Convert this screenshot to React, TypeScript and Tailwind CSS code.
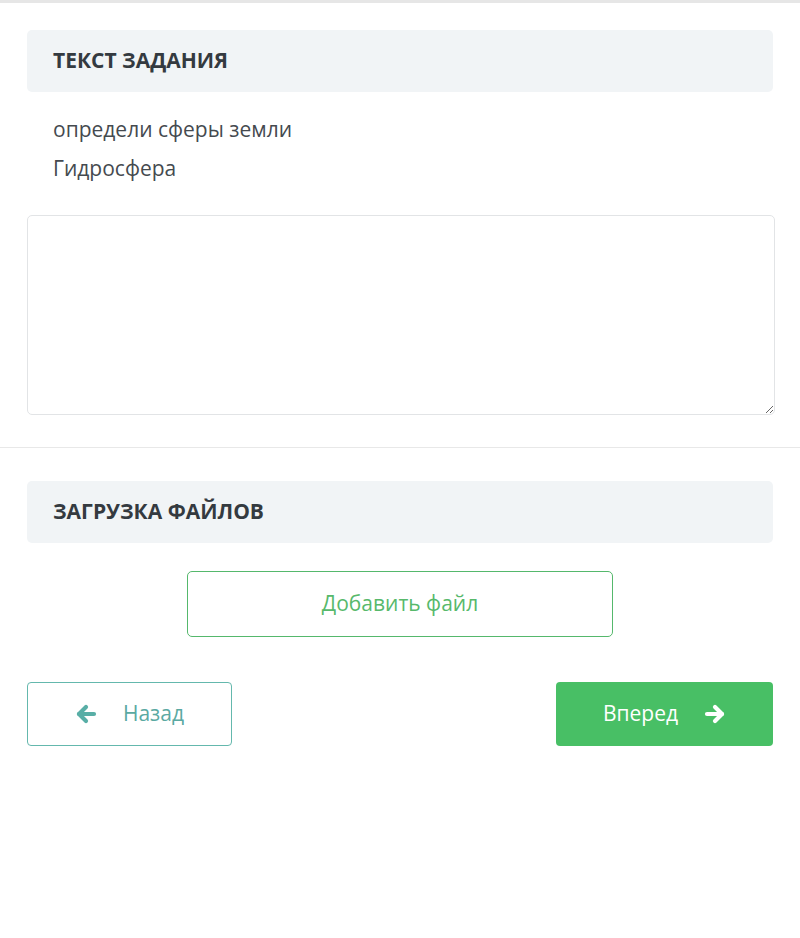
function Arrow({ dir, className }: { dir: "left" | "right"; className?: string }) {
  return (
    <svg viewBox="0 0 22 20" className={className} fill="none" stroke="currentColor" strokeWidth="4.2" strokeLinecap="round" strokeLinejoin="round">
      {dir === "right" ? (
        <>
          <path d="M3 10h15" />
          <path d="M11 3l7 7-7 7" />
        </>
      ) : (
        <>
          <path d="M19 10H4" />
          <path d="M11 3l-7 7 7 7" />
        </>
      )}
    </svg>
  );
}

function SectionHeader({ title }: { title: string }) {
  return (
    <div className="bg-[#f1f4f6] rounded-[5px] h-[62px] flex items-center px-[26px]">
      <h2 className="text-[21px] font-bold text-[#343a40]">{title}</h2>
    </div>
  );
}

export default function App() {
  return (
    <div className="w-[800px] h-[938px] bg-white [font-family:'Open_Sans',sans-serif] border-t-[3px] border-[#e6e6e6]">
      <section className="px-[27px] pt-[27px] pb-[32px]">
        <SectionHeader title="ТЕКСТ ЗАДАНИЯ" />
        <div className="px-[26px] pt-[18px] text-[21px] leading-[39px] text-[#454a4f]">
          <p>определи сферы земли</p>
          <p>Гидросфера</p>
        </div>
        <textarea className="mt-[27px] block w-[748px] h-[200px] border border-[#e2e4e6] rounded-[5px] outline-none" />
      </section>

      <div className="border-t border-[#e8e8e8]" />

      <section className="px-[27px] pt-[33px]">
        <SectionHeader title="ЗАГРУЗКА ФАЙЛОВ" />
        <div className="flex justify-center pt-[28px]">
          <button className="w-[426px] h-[66px] border border-[#55b86c] rounded-[5px] text-[21px] text-[#57b96b] bg-white">
            Добавить файл
          </button>
        </div>

        <div className="flex justify-between mt-[45px]">
          <button className="w-[205px] h-[64px] border border-[#64b8ad] rounded-[4px] bg-white flex items-center justify-center gap-[26px] text-[21px] text-[#5aa9a2]">
            <Arrow dir="left" className="w-[22px] h-[20px] text-[#58aea6]" />
            Назад
          </button>
          <button className="w-[217px] h-[64px] rounded-[4px] bg-[#48bf65] flex items-center justify-center gap-[26px] text-[21px] text-white">
            Вперед
            <Arrow dir="right" className="w-[22px] h-[20px]" />
          </button>
        </div>
      </section>
    </div>
  );
}
